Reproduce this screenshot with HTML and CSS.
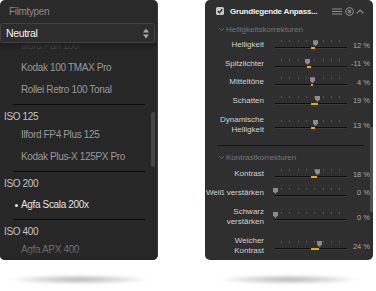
FILE: index.html
```html
<!DOCTYPE html>
<html lang="de">
<head>
    <meta charset="UTF-8">
    <title>Filmtypen / Grundlegende Anpassungen</title>
    <link rel="stylesheet" href="styles.css">
</head>
<body>
    <div class="stage">

        <!-- Filmtypen -->
        <div class="col col-left">
            <div class="panel film">
                <div class="film-head">Filmtypen</div>
                <div class="select">
                    <span>Neutral</span>
                    <svg class="updown" width="6" height="11" viewBox="0 0 6 11">
                        <path d="M0 4.5 L3 0.5 L6 4.5 Z" fill="#a8a8a8"/>
                        <path d="M0 6.5 L3 10.5 L6 6.5 Z" fill="#a8a8a8"/>
                    </svg>
                </div>
                <div class="film-list">
                    <div class="film-item first">Ilford Pan 100</div>
                    <div class="film-item">Kodak 100 TMAX Pro</div>
                    <div class="film-item">Rollei Retro 100 Tonal</div>
                    <div class="sep"></div>
                    <div class="iso">ISO 125</div>
                    <div class="film-item">Ilford FP4 Plus 125</div>
                    <div class="film-item">Kodak Plus-X 125PX Pro</div>
                    <div class="sep"></div>
                    <div class="iso">ISO 200</div>
                    <div class="film-item sel">Agfa Scala 200x</div>
                    <div class="sep"></div>
                    <div class="iso">ISO 400</div>
                    <div class="film-item">Agfa APX 400</div>
                </div>
                <div class="scroll"></div>
            </div>
            <div class="floor"></div>
        </div>

        <!-- Grundlegende Anpassungen -->
        <div class="col col-right">
            <div class="panel adjust">
                <div class="adj-head">
                    <svg class="check" width="8" height="8" viewBox="0 0 8 8">
                        <rect x="0" y="0" width="8" height="8" rx="1.5" fill="#c6c6c6"/>
                        <path d="M1.8 4.1 L3.4 5.7 L6.3 2.2" fill="none" stroke="#2b2b2b" stroke-width="1.4"/>
                    </svg>
                    <span class="adj-title">Grundlegende Anpass...</span>
                    <svg class="ico menu" width="10" height="7" viewBox="0 0 10 7">
                        <path d="M0 1 H10 M0 3.5 H10 M0 6 H10" stroke="#8e8e8e" stroke-width="1.1"/>
                    </svg>
                    <svg class="ico" width="9" height="9" viewBox="0 0 9 9">
                        <circle cx="4.5" cy="4.5" r="3.8" fill="none" stroke="#8e8e8e" stroke-width="1.1"/>
                        <path d="M3 3 L6 6 M6 3 L3 6" stroke="#8e8e8e" stroke-width="1.1"/>
                    </svg>
                    <svg class="ico" width="8" height="5" viewBox="0 0 8 5">
                        <path d="M0.6 4.4 L4 1 L7.4 4.4" fill="none" stroke="#8e8e8e" stroke-width="1.2"/>
                    </svg>
                </div>

                <div class="group">
                    <svg width="5" height="3" viewBox="0 0 5 3"><path d="M0.4 0.4 L2.5 2.5 L4.6 0.4" fill="none" stroke="#777" stroke-width="0.9"/></svg>
                    <span>Helligkeitskorrekturen</span>
                </div>

                <div class="row">
                    <div class="label">Helligkeit</div>
                    <div class="slider">
                        <div class="ticks"></div><div class="track"></div>
                        <div class="fill" style="left:36px;width:4px"></div>
                        <div class="thumb" style="left:38px"></div>
                    </div>
                    <div class="val">12 %</div>
                </div>
                <div class="row">
                    <div class="label">Spitzlichter</div>
                    <div class="slider">
                        <div class="ticks"></div><div class="track"></div>
                        <div class="fill" style="left:32px;width:4px"></div>
                        <div class="thumb" style="left:30px"></div>
                    </div>
                    <div class="val">-11 %</div>
                </div>
                <div class="row">
                    <div class="label">Mitteltöne</div>
                    <div class="slider">
                        <div class="ticks"></div><div class="track"></div>
                        <div class="fill" style="left:36px;width:2px"></div>
                        <div class="thumb" style="left:35px"></div>
                    </div>
                    <div class="val">4 %</div>
                </div>
                <div class="row">
                    <div class="label">Schatten</div>
                    <div class="slider">
                        <div class="ticks"></div><div class="track"></div>
                        <div class="fill" style="left:36px;width:7px"></div>
                        <div class="thumb" style="left:40px"></div>
                    </div>
                    <div class="val">19 %</div>
                </div>
                <div class="row tall">
                    <div class="label">Dynamische<br>Helligkeit</div>
                    <div class="slider">
                        <div class="ticks"></div><div class="track"></div>
                        <div class="fill" style="left:36px;width:4px"></div>
                        <div class="thumb" style="left:38px"></div>
                    </div>
                    <div class="val">13 %</div>
                </div>

                <div class="rule"></div>

                <div class="group second">
                    <svg width="5" height="3" viewBox="0 0 5 3"><path d="M0.4 0.4 L2.5 2.5 L4.6 0.4" fill="none" stroke="#777" stroke-width="0.9"/></svg>
                    <span>Kontrastkorrekturen</span>
                </div>

                <div class="row">
                    <div class="label">Kontrast</div>
                    <div class="slider">
                        <div class="ticks"></div><div class="track"></div>
                        <div class="fill" style="left:36px;width:6px"></div>
                        <div class="thumb" style="left:40px"></div>
                    </div>
                    <div class="val">18 %</div>
                </div>
                <div class="row">
                    <div class="label">Weiß verstärken</div>
                    <div class="slider">
                        <div class="ticks"></div><div class="track"></div>
                        <div class="thumb" style="left:-2px"></div>
                    </div>
                    <div class="val">0 %</div>
                </div>
                <div class="row tall">
                    <div class="label">Schwarz<br>verstärken</div>
                    <div class="slider">
                        <div class="ticks"></div><div class="track"></div>
                        <div class="thumb" style="left:-2px"></div>
                    </div>
                    <div class="val">0 %</div>
                </div>
                <div class="row tall last">
                    <div class="label">Weicher<br>Kontrast</div>
                    <div class="slider">
                        <div class="ticks"></div><div class="track"></div>
                        <div class="fill" style="left:36px;width:8px"></div>
                        <div class="thumb" style="left:42px"></div>
                    </div>
                    <div class="val">24 %</div>
                </div>

                <div class="scroll"></div>
            </div>
            <div class="floor"></div>
        </div>

    </div>
</body>
</html>
```

FILE: styles.css
```css
* {
    box-sizing: border-box;
}
body {
    margin: 0;
    background: #fff;
    font-family: "Liberation Sans", Arial, sans-serif;
}
.stage {
    display: flex;
    width: 376px;
    height: 291px;
}
.col {
    display: flex;
    flex-direction: column;
    align-items: center;
}
.col-left {
    width: 158px;
}
.col-right {
    width: 168px;
    margin-left: 47px;
}
.panel {
    position: relative;
    width: 100%;
    height: 260px;
    border-radius: 5px;
    overflow: hidden;
}
/* weicher Schatten unter den Paneelen */
.floor {
    width: 140px;
    height: 9px;
    margin-top: 15px;
    border-radius: 50%;
    background: radial-gradient(ellipse at center, rgba(0,0,0,0.3) 0%, rgba(0,0,0,0.12) 45%, rgba(0,0,0,0) 72%);
    filter: blur(1.5px);
}

/* ---------- Filmtypen ---------- */
.film {
    background: #2a2a2a;
    border-right: 1px solid #3c3c3c;
    font-size: 10px;
    letter-spacing: -0.35px;
}
.film-head {
    height: 23px;
    line-height: 23px;
    padding-left: 9px;
    color: #8a8a8a;
}
.select {
    display: flex;
    align-items: center;
    justify-content: space-between;
    width: 155px;
    height: 20px;
    padding: 0 5px 0 5px;
    border: 1px solid #424242;
    border-radius: 3px;
    background: #2d2d2d;
    color: #f4f4f4;
    font-size: 10.5px;
    position: relative;
    z-index: 2;
}
.film-list {
    position: relative;
    height: 217px;
    overflow: hidden;
    background: #272727;
}
.film-list::before,
.film-list::after {
    content: "";
    position: absolute;
    left: 0;
    right: 0;
    pointer-events: none;
}
.film-list::before {
    top: 0;
    height: 14px;
    background: linear-gradient(#1e1e1e, rgba(39,39,39,0.55) 60%, rgba(39,39,39,0));
}
.film-list::after {
    bottom: 0;
    height: 22px;
    background: linear-gradient(rgba(39,39,39,0), rgba(39,39,39,0.5) 60%, #272727);
}
.film-item {
    height: 22px;
    line-height: 22px;
    padding-left: 21px;
    color: #9a9a9a;
}
.film-item.first {
    margin-top: -8px;
}
.film-item.sel {
    margin-top: 3px;
    color: #e4e4e4;
    position: relative;
}
.film-item.sel::before {
    content: "";
    position: absolute;
    left: 15px;
    top: 10px;
    width: 3px;
    height: 3px;
    border-radius: 50%;
    background: #e4e4e4;
}
.iso {
    height: 14px;
    line-height: 14px;
    padding-left: 4px;
    color: #c4c4c4;
}
.sep {
    height: 1px;
    margin: 3px 12px 5px 13px;
    background: #0c0c0c;
}
.film .scroll {
    position: absolute;
    right: 2px;
    top: 112px;
    width: 4px;
    height: 55px;
    border-radius: 2px;
    background: #464646;
}

/* ---------- Grundlegende Anpassungen ---------- */
.adjust {
    background: #2f2f2f;
    font-size: 8px;
    color: #d2d2d2;
}
.adj-head {
    display: flex;
    align-items: center;
    height: 22px;
    padding: 0 9px 0 11px;
}
.adj-title {
    flex: 1;
    margin-left: 6px;
    font-weight: bold;
    letter-spacing: -0.2px;
    color: #f2f2f2;
}
.ico {
    margin-left: 2px;
}
.ico.menu {
    margin-right: 1px;
}
.group {
    display: flex;
    align-items: center;
    height: 14px;
    padding-left: 14px;
    color: #767676;
}
.group svg {
    margin-right: 2px;
}
.group.second {
    height: 16px;
    margin-top: 3px;
}
.row {
    display: flex;
    align-items: center;
    height: 18.5px;
}
.row.tall {
    height: 30px;
}
.row.last {
    height: 28px;
}
.label {
    display: flex;
    justify-content: flex-end;
    width: 59px;
    text-align: right;
    white-space: nowrap;
    line-height: 10px;
}
.slider {
    position: relative;
    width: 72px;
    height: 12px;
    margin-left: 11px;
}
.ticks {
    position: absolute;
    left: 6px;
    top: 1px;
    width: 62px;
    height: 2px;
    background: repeating-linear-gradient(90deg, #555 0 1px, transparent 1px 8.33px);
}
.track {
    position: absolute;
    left: 0;
    right: 0;
    top: 8px;
    height: 1px;
    background: #0f0f0f;
    box-shadow: 0 1px 0 #3a3a3a;
}
.fill {
    position: absolute;
    top: 8px;
    height: 2px;
    background: #eba800;
}
.thumb {
    position: absolute;
    top: 1px;
    width: 5px;
    height: 6px;
    background: #8c8c8c;
    clip-path: polygon(0 0, 100% 0, 100% 60%, 50% 100%, 0 60%);
}
.val {
    width: 23px;
    text-align: right;
    font-size: 7.5px;
    color: #a8a8a8;
}
.rule {
    height: 1px;
    margin: 5px 9px 0 13px;
    background: #151515;
}
.adjust .scroll {
    position: absolute;
    right: 0;
    top: 127px;
    width: 3px;
    height: 85px;
    border-radius: 1px;
    background: #505050;
}
```
